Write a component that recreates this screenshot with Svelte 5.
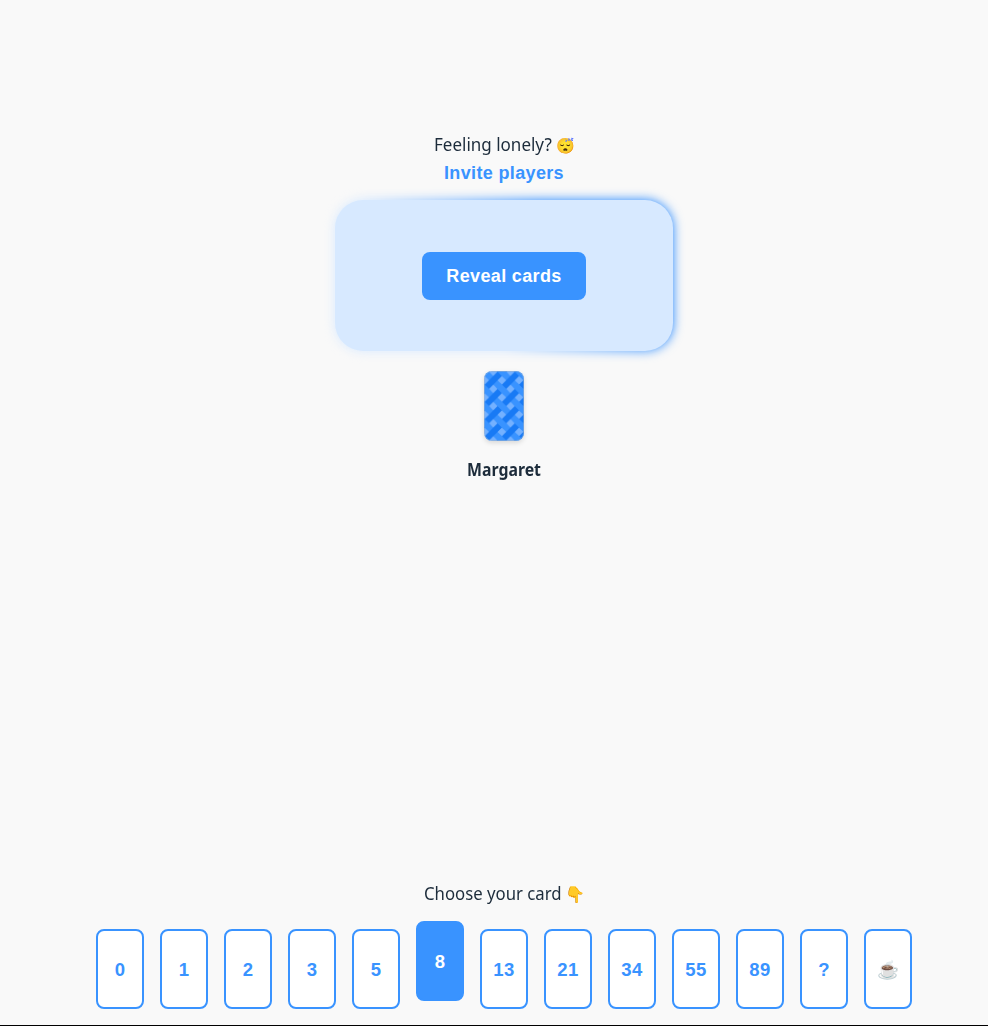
<script>
  const cards = ['0', '1', '2', '3', '5', '8', '13', '21', '34', '55', '89', '?', '☕'];
  let picked = $state('8');
</script>

<main>
  <section class="table-area">
    <p class="note"><span class="label lonely">Feeling lonely?</span><span class="emoji">😴</span></p>
    <button class="invite">Invite players</button>
    <div class="table"><button class="reveal">Reveal cards</button></div>
    <svg class="back" viewBox="0 0 40 70" width="40" height="70">
      <defs>
        <pattern id="weave" width="17.2" height="17.2" patternUnits="userSpaceOnUse" x="0.7" y="0.7">
          <rect width="17.2" height="17.2" fill="#74b1ff" />
          <path d="M-5-5L22.2 22.2M-5 12.2L5 22.2M12.2-5L22.2 5" stroke="#3993ff" stroke-width="6.2" />
          <path d="M-5 22.2L22.2-5M-5 5L5-5M12.2 22.2L22.2 12.2" stroke="#187af5" stroke-width="6.2" />
          <path d="M-3.8-3.8L3.8 3.8M13.4 13.4L21 21M-3.8 13.4L3.8 21M13.4-3.8L21 3.8" stroke="#3993ff" stroke-width="6.2" />
        </pattern>
      </defs>
      <rect width="40" height="70" fill="url(#weave)" />
      <rect x=".5" y=".5" width="39" height="69" rx="7.5" fill="none" stroke="#a9b6c6" stroke-opacity=".45" />
    </svg>
    <div class="name"><span class="label">Margaret</span></div>
  </section>
  <footer>
    <p class="note"><span class="label choose">Choose your card</span><span class="emoji hand">👇</span></p>
    <div class="deck">
      {#each cards as card}
        <button class="card" class:picked={picked === card} class:cup={card === '☕'} onclick={() => (picked = card)}>{card}</button>
      {/each}
    </div>
  </footer>
</main>

<style>
  :global(body) { background: #f9f9f9; }
  main {
    box-sizing: border-box; height: 1026px; padding: 130px 0 16px 20px;
    display: flex; flex-direction: column; justify-content: space-between;
    border-bottom: 1px solid #000; color: #1d2c3b; overflow: hidden;
    font: 18px/28px "Noto Sans", sans-serif;
  }
  button { font: bold 18px/26px "Liberation Sans", Arial, sans-serif; letter-spacing: .35px; padding: 0; border: 0; cursor: pointer; }
  .table-area { display: flex; flex-direction: column; align-items: center; }
  .note { margin: 0; display: flex; justify-content: center; gap: 4px; }
  .label { display: block; transform-origin: left; }
  .lonely { width: 118px; transform: scaleX(.945); white-space: nowrap; }
  .choose { width: 137px; transform: scaleX(.93); white-space: nowrap; }
  .emoji { font-size: 15px; line-height: 30px; height: 28px; }
  .hand { font-size: 16px; line-height: 30px; width: 20px; }
  .invite { color: #3993ff; background: none; height: 28px; margin-top: 1px; }
  .table {
    position: relative; width: 338px; height: 151px; margin-top: 13px; border-radius: 28px;
    background: #d7e9ff; display: grid; place-items: center;
  }
  .table::before {
    content: ''; position: absolute; inset: 0; z-index: -1; border-radius: 28px; filter: blur(5.5px);
    background: linear-gradient(45deg, #d7e9ff 35%, #1f84ff 72%);
  }
  .reveal { width: 164px; height: 48px; background: #3993ff; color: #fff; border-radius: 8px; }
  .back { margin-top: 20px; border-radius: 8px; box-shadow: 0 2px 5px #0002; }
  .name { font-weight: 700; margin-top: 14px; height: 28px; }
  .name .label { transform: scaleX(.88); transform-origin: center; }
  .deck { display: flex; justify-content: center; gap: 16px; margin-top: 22px; }
  .card {
    box-sizing: border-box; width: 48px; height: 80px; border: 2px solid #3993ff; border-radius: 8px;
    background: #fff; color: #3993ff; font-size: 18.5px; letter-spacing: .35px; padding-top: 1px;
  }
  .cup { font-size: 18px; padding-top: 2px; }
  .picked { background: #3993ff; color: #fff; transform: translateY(-8px); }
</style>
